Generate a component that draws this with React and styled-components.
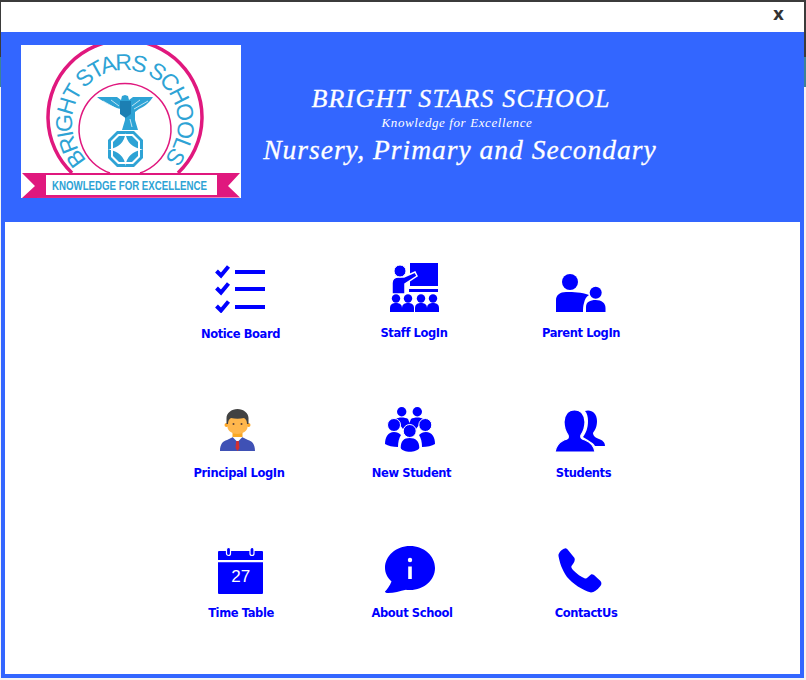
import React from 'react';
import styled, { createGlobalStyle } from 'styled-components';

const GlobalStyle = createGlobalStyle`
  html, body {
    margin: 0;
    padding: 0;
    background: #f4f4f4;
  }
`;

const Page = styled.div`
  width: 806px;
  height: 680px;
  padding: 2px 2px 2px 1px;
  box-sizing: border-box;
  overflow: hidden;
  background: linear-gradient(#3b3b3b 0 57px, #3d8296 57px 87px, #f4f4f4 87px);
`;

const Modal = styled.div`
  height: 676px;
  background: #fff;
  display: flex;
  flex-direction: column;
`;

const TopBar = styled.div`
  flex: none;
  height: 30px;
  display: flex;
  align-items: center;
  justify-content: flex-end;
  padding-right: 20px;
`;

const CloseButton = styled.span`
  font: bold 17px "DejaVu Sans", sans-serif;
  color: #333;
  line-height: 1;
  margin-top: -6px;
`;

const Header = styled.header`
  flex: none;
  height: 190px;
  background: #3366ff;
  display: flex;
  padding: 13px 0 0 20px;
  box-sizing: border-box;
`;

const LogoBox = styled.div`
  width: 220px;
  height: 153px;
  background: #fff;
  flex: none;
`;

const Titles = styled.div`
  width: 440px;
  padding-top: 40px;
  color: #fff;
  text-align: center;
  font-family: "Liberation Serif", serif;
  font-style: italic;
  -webkit-text-stroke: 0.3px #fff;
`;

const SchoolName = styled.div`
  font-size: 26px;
  line-height: 28px;
  letter-spacing: 1.2px;
`;

const Tagline = styled.div`
  font-size: 13px;
  line-height: 13px;
  margin-top: 3px;
  margin-left: -8px;
  letter-spacing: 0.6px;
  -webkit-text-stroke: 0;
`;

const Level = styled.div`
  font-size: 27.5px;
  line-height: 32px;
  letter-spacing: 1px;
  margin-top: 5px;
  margin-left: -2px;
`;

const Body = styled.main`
  flex: 1;
  min-height: 0;
  border: solid #3366ff;
  border-width: 0 4px 4px 4px;
  padding: 41px 0 0 150px;
`;

const MenuGrid = styled.div`
  display: grid;
  grid-template-columns: repeat(3, 171px);
  grid-template-rows: 140px 140px auto;
`;

const MenuItem = styled.a`
  display: flex;
  flex-direction: column;
  align-items: center;
  margin-left: ${p => p.$nudge || 0}px;
`;

const IconSlot = styled.div`
  height: 52px;
  box-sizing: border-box;
  padding-top: ${p => p.$top}px;
  margin-left: ${p => p.$shift || 0}px;

  svg {
    display: block;
  }
`;

const Label = styled.span`
  margin-top: ${p => p.$gap}px;
  font: bold 11.5px/14px "DejaVu Sans", Verdana, sans-serif;
  letter-spacing: -0.4px;
  color: #0000ff;
  white-space: nowrap;
`;

const BLUE = '#0000ff';

const ChecklistIcon = () => (
  <svg width="52" height="48" viewBox="0 0 52 48">
    {[0, 17, 35].map(y => (
      <g key={y}>
        <path d={`M2.500 ${y + 6}l4.500 4.500 7.500-9`} fill="none" stroke={BLUE} strokeWidth="4" />
        <rect x="21" y={y + 5} width="30" height="4" fill={BLUE} />
      </g>
    ))}
  </svg>
);

const TeacherIcon = () => (
  <svg width="50" height="50" viewBox="0 0 50 50" fill={BLUE}>
    <rect x="21" y="0" width="28" height="23" />
    <rect x="20" y="26" width="29" height="3" />
    <path d="M3 20c0-4 3-6 7-6h5l11-5 2 4-12 8v10H3z" fill={BLUE} stroke="#fff" strokeWidth="1.500" />
    <circle cx="11" cy="8" r="6" stroke="#fff" strokeWidth="1" />
    {[7, 19, 32, 44].map(x => (
      <g key={x}>
        <circle cx={x} cy="35.500" r="4.200" />
        <path d={`M${x - 6} 49v-4c0-4 3-5 6-5s6 1 6 5v4z`} />
      </g>
    ))}
  </svg>
);

const ParentIcon = () => (
  <svg width="50" height="38" viewBox="0 0 50 38" fill={BLUE}>
    <circle cx="14" cy="8" r="8" />
    <circle cx="39.700" cy="18.700" r="6" />
    <path d="M0 38V26c0-5 4-8 10-8 8 0 15 0 23 3-3 2-4 4-5 8-1 3-1 6-1 9z" />
    <path d="M30 38v-5c0-5 4-7 9.700-7 6 0 9.800 3 9.800 8v4z" />
  </svg>
);

const PrincipalIcon = () => (
  <svg width="35" height="42" viewBox="0 0 35 42">
    <path d="M0 42c0-7 3-10 7-11l6-3h9l6 3c4 1 7 4 7 11z" fill="#3f51b5" />
    <path d="M12.500 28l5 5 5-5v-2h-10z" fill="#fff" />
    <path d="M16.200 32h2.600l.7 7-2 3-2-3z" fill="#d32f2f" />
    <rect x="12.500" y="20" width="10" height="8" fill="#f9a825" />
    <circle cx="6.500" cy="16" r="2" fill="#ffa726" />
    <circle cx="28.500" cy="16" r="2" fill="#ffa726" />
    <path d="M7.500 9h20v9c0 4-5 7-10 7s-10-3-10-7z" fill="#ffb74d" />
    <path d="M6.500 15V9c0-5 5-9 11-9s11 4 11 9v6h-1.500c0-3-1-5-3-6-4 1-9 1-13 0-2 1-3 3-3 6z" fill="#424242" />
    <circle cx="13.500" cy="15" r="1" fill="#5d4037" />
    <circle cx="21.500" cy="15" r="1" fill="#5d4037" />
  </svg>
);

const GroupIcon = () => (
  <svg width="50" height="46" viewBox="0 0 50 46" fill={BLUE}>
    <circle cx="16.700" cy="4.700" r="4.700" />
    <circle cx="32.300" cy="4.700" r="4.700" />
    <path d="M11 12c2-2 9-2 12 0l2 5-7 5c-2-3-5-6-7-10z" />
    <path d="M38 12c-2-2-9-2-12 0l-2 5 7 5c2-3 5-6 7-10z" />
    <circle cx="9" cy="18" r="6.500" stroke="#fff" strokeWidth="1" />
    <circle cx="40.300" cy="18" r="6.500" stroke="#fff" strokeWidth="1" />
    <path d="M0 37c0-7 3-12 9-12 3 0 5 1 7 3-2 3-3 7-3 12-5 0-10-1-13-3z" />
    <path d="M50 37c0-7-3-12-9-12-3 0-5 1-7 3 2 3 3 7 3 12 5 0 10-1 13-3z" />
    <circle cx="24.700" cy="24" r="6.500" stroke="#fff" strokeWidth="1" />
    <path d="M15.700 41c0-7 3-10 9-10s9.600 3 9.600 10c-3 5-16 5-18.600 0z" />
  </svg>
);

const UsersIcon = () => (
  <svg width="50" height="42" viewBox="0 0 50 42">
    <path fill={BLUE} d="M30 1C36-1 42 3 42 11c0 6-2 9-4 12 0 3 3 5 6 6 3 1 6 3 6 7H40c-2-4-8-6-12-9 3-4 5-9 5-16 0-4-1-8-3-10z" />
    <path fill={BLUE} stroke="#fff" strokeWidth="1.200" d="M19.500 0C26 0 30 5 30 12c0 6-2 10-4 13-1 3 1 4 4 5 5 2 9 5 10 12H0c1-7 5-10 9-12 4-1 5-2 4-5-2-3-4-7-4-13C9 5 13 0 19.500 0z" />
  </svg>
);

const CalendarIcon = () => (
  <svg width="45" height="47" viewBox="0 0 45 47">
    <path fill={BLUE} d="M1 4h43a1 1 0 0 1 1 1v8H0V5a1 1 0 0 1 1-1zM0 15.300h45V46a1 1 0 0 1-1 1H1a1 1 0 0 1-1-1z" />
    <rect x="8.500" y="0.500" width="4" height="8" rx="2" fill={BLUE} stroke="#fff" strokeWidth="1.200" />
    <rect x="32" y="0.500" width="4" height="8" rx="2" fill={BLUE} stroke="#fff" strokeWidth="1.200" />
    <text x="22.700" y="34.800" textAnchor="middle" fill="#fff" fontSize="17" fontFamily="Liberation Sans, sans-serif">27</text>
  </svg>
);

const InfoBubbleIcon = () => (
  <svg width="50" height="47" viewBox="0 0 50 47">
    <path fill={BLUE} d="M25 0c14 0 25 10 25 22S39 44 25 44c-1 0-3 0-4-.3C15 45 9 47 3 47c-2 0-3.500-1-3-1.500 2-2 5-6 6.500-10C2.500 32 0 27 0 22 0 10 11 0 25 0z" />
    <rect x="23.200" y="20.500" width="3.600" height="12.500" fill="#fff" />
    <circle cx="25" cy="14" r="2.200" fill="#fff" />
  </svg>
);

const PhoneIcon = () => (
  <svg width="44" height="45" viewBox="0 0 44 45">
    <path fill={BLUE} d="M.5 8C0 5 4 1 7 .5c1-.5 2 .5 3 1.500l6.500 8c1 2-.5 5-3 8-.5 1 0 2 1.500 4 4 4 8 7 12 8.500 2 .5 3-2 6-4 1-.5 2 0 3 .5l6.500 6c1.500 2 1 4-.5 5.500-3 3.500-6 6-9 6-9-2.500-18-8.500-24-15.500C4 22 1.500 14 .5 8z" />
  </svg>
);

const PINK = '#e0187e';
const SKY = '#2ea3d5';

const Logo = () => (
  <svg width="220" height="153" viewBox="0 0 220 153">
    <defs>
      <path id="arc" d="M66 115A53 53 0 1 1 142 115" />
    </defs>
    <path d="M51 128A77 77 0 1 1 157 128" fill="none" stroke={PINK} strokeWidth="3.500" />
    <path d="M89 128A46 46 0 1 1 119 128" fill="none" stroke={PINK} strokeWidth="1.500" />
    <text fill={SKY} fontSize="23" fontFamily="Liberation Sans, sans-serif">
      <textPath href="#arc" textLength="246" lengthAdjust="spacing">BRIGHT STARS SCHOOLS</textPath>
    </text>
    {/* eagle */}
    <path d="M76 52h20l4 3 1-4 3-1 3 1 1 4 4-3h20c-3 5-9 10-14 12l-4 3v8l3 10h-16l3-10v-8l-4-3c-6-1-18-7-24-12z" fill={SKY} />
    <path d="M82 56l14 8M90 55l8 6M127 56l-14 8M119 55l-8 6M100 74l-2 8M109 74l2 8" fill="none" stroke="#fff" strokeWidth="0.700" />
    <path d="M99 56h11v13l-5.500 4-5.500-4z" fill="#1c7fb3" />
    {/* medallion */}
    <path d="M96 86h17l9 9v18l-9 9H96l-9-9V95z" fill={SKY} />
    <path d="M97 89h15l7 7v16l-7 7H97l-7-7V96z" fill="#fff" />
    <path d="M98 91h13l6 6v14l-6 6H98l-6-6V97z" fill={SKY} />
    <path d="M104.500 88Q106 102 122 104.500 106 107 104.500 121 103 107 87 104.500 103 102 104.500 88z" fill="#fff" />
    {/* ribbon */}
    <path d="M1 128h218l-12 13 12 11.500L1 153l13-12z" fill={PINK} />
    <rect x="25" y="130" width="171" height="20" fill="#fff" />
    <text transform="translate(31 145) scale(1 1.300)" fill={SKY} fontSize="10.500" fontWeight="bold" fontFamily="Liberation Sans, sans-serif" textLength="155" lengthAdjust="spacingAndGlyphs">KNOWLEDGE FOR EXCELLENCE</text>
  </svg>
);

const items = [
  { label: 'Notice Board', icon: <ChecklistIcon />, top: 2, shift: -1, nudge: 0, gap: 12 },
  { label: 'Staff LogIn', icon: <TeacherIcon />, top: 0, shift: 0, nudge: 5, gap: 11 },
  { label: 'Parent LogIn', icon: <ParentIcon />, top: 11, shift: -1, nudge: -3, gap: 11 },
  { label: 'Principal LogIn', icon: <PrincipalIcon />, top: 6, shift: -3, nudge: -3, gap: 11 },
  { label: 'New Student', icon: <GroupIcon />, top: 4, shift: -3, nudge: 0, gap: 11 },
  { label: 'Students', icon: <UsersIcon />, top: 7, shift: -8, nudge: 2, gap: 11 },
  { label: 'Time Table', icon: <CalendarIcon />, top: 4, shift: -1, nudge: 1, gap: 11 },
  { label: 'About School', icon: <InfoBubbleIcon />, top: 3, shift: -4, nudge: 1, gap: 11 },
  { label: 'ContactUs', icon: <PhoneIcon />, top: 5, shift: -12, nudge: 7, gap: 11 },
];

const App = () => (
  <>
    <GlobalStyle />
    <Page>
      <Modal>
        <TopBar>
          <CloseButton>x</CloseButton>
        </TopBar>
        <Header>
          <LogoBox>
            <Logo />
          </LogoBox>
          <Titles>
            <SchoolName>BRIGHT STARS SCHOOL</SchoolName>
            <Tagline>Knowledge for Excellence</Tagline>
            <Level>Nursery, Primary and Secondary</Level>
          </Titles>
        </Header>
        <Body>
          <MenuGrid>
            {items.map(item => (
              <MenuItem key={item.label} $nudge={item.nudge}>
                <IconSlot $top={item.top} $shift={item.shift}>{item.icon}</IconSlot>
                <Label $gap={item.gap}>{item.label}</Label>
              </MenuItem>
            ))}
          </MenuGrid>
        </Body>
      </Modal>
    </Page>
  </>
);

export default App;
